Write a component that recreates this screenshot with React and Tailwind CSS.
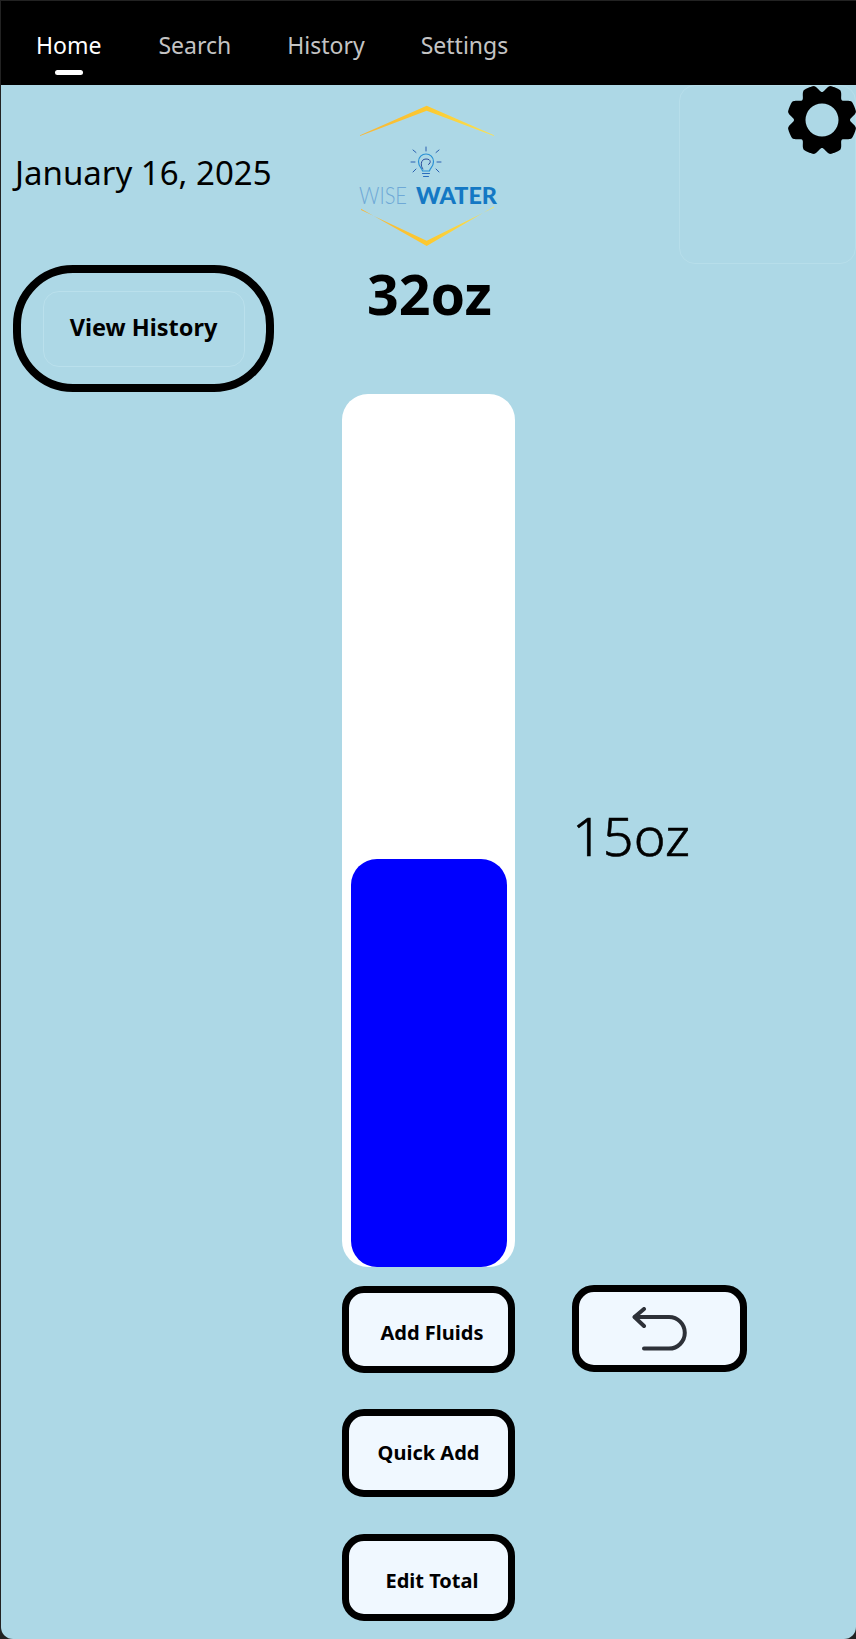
import { useMemo } from "react";

const FONT = "font-['Noto_Sans','Open_Sans',sans-serif]";

// 8 lobed cog outline, notches sit on the axes
function gearPath(cx, cy, outer, inner, hole) {
  const pts = [];
  const steps = 360;
  for (let i = 0; i < steps; i++) {
    const a = (i / steps) * Math.PI * 2;
    const period = Math.PI / 4;
    let d = ((a % period) + period) % period;
    if (d > period / 2) d = period - d;
    const t = Math.min(d / (period * 0.33), 1);
    const r = inner + (outer - inner) * (1 - Math.cos(t * Math.PI)) * 0.5;
    pts.push(`${(cx + r * Math.cos(a)).toFixed(2)} ${(cy + r * Math.sin(a)).toFixed(2)}`);
  }
  return (
    `M${pts.join("L")}Z` +
    `M${cx - hole} ${cy}a${hole} ${hole} 0 1 0 ${hole * 2} 0a${hole} ${hole} 0 1 0 ${-hole * 2} 0Z`
  );
}

function NavTab({ label, active }) {
  return (
    <div className="relative">
      <span className={`text-[23px] leading-none ${active ? "text-white" : "text-[#c4c4c4]"}`}>{label}</span>
      {active && <span className="absolute left-[19px] top-[36px] h-[5px] w-[28px] rounded-full bg-white" />}
    </div>
  );
}

function ActionButton({ label, className = "" }) {
  return (
    <button className={`flex w-[173px] items-center justify-center rounded-[22px] border-[7px] border-black bg-[#f0f8ff] text-[20px] font-bold text-black ${className}`}>
      {label}
    </button>
  );
}

function Logo() {
  return (
    <svg width="150" height="150" viewBox="0 0 150 150" className="ml-[6px]">
      <defs>
        <linearGradient id="gold" x1="0" x2="1" y1="0" y2="0">
          <stop offset="0" stopColor="#f6b73c" />
          <stop offset="0.5" stopColor="#fdc92f" />
          <stop offset="1" stopColor="#f7e25a" />
        </linearGradient>
      </defs>
      <path d="M12 35.300 L78.700 5.700 L146 35.300 L146 36 L78.700 10.700 L12 36Z" fill="url(#gold)" />
      <path d="M13 108.800 L78.700 146 L146 106.500 L146 107.500 L78.700 140.700 L13 110Z" fill="url(#gold)" />
      {/* bulb */}
      <g fill="none" strokeLinecap="round">
        <path d="M78 47v4M65 50l3 2.500M91 50l-3 2.500M63 62h4M89 62h4M65 72l3-3M91 72l-3-3" stroke="#2a5fb0" strokeWidth="1" />
        <path d="M74.500 71c-.5-3-4-4-4-9.500a7.500 7.500 0 0 1 15 0c0 5.500-3.500 6.500-4 9.500z" stroke="#2a90d4" strokeWidth="1.200" />
        <path d="M75 69c-2.500-2-3-10 3-10s4.500 5 2.500 5.500" stroke="#2b4a9a" strokeWidth="1" />
        <path d="M74.500 73.500h7M75.500 76.500h5" stroke="#2b6cbc" strokeWidth="1" />
      </g>
      <text x="11" y="104" className="font-['Lato',sans-serif]" fontSize="23" fontWeight="300" fill="#6fa9d6" textLength="48" lengthAdjust="spacingAndGlyphs">WISE</text>
      <text x="68" y="104" className="font-['Lato',sans-serif]" fontSize="23" fontWeight="900" fill="#1478c4" textLength="81" lengthAdjust="spacingAndGlyphs">WATER</text>
    </svg>
  );
}

export default function App() {
  const gear = useMemo(() => gearPath(40, 40, 35, 28, 16.5), []);

  return (
    <div className={`relative h-[1639px] w-[856px] overflow-hidden bg-[#222222] pl-[1px] pt-[1px] ${FONT}`}>
      <div className="relative h-[1638px] overflow-hidden rounded-b-[12px] bg-[#add8e6]">
        {/* top nav */}
        <nav className="flex h-[84px] items-center gap-[56px] bg-black pl-[35px] pt-[8px]">
          <NavTab label="Home" active />
          <div className="ml-[1px]">
            <NavTab label="Search" />
          </div>
          <NavTab label="History" />
          <NavTab label="Settings" />
        </nav>

        {/* settings cog */}
        <svg width="80" height="80" viewBox="0 0 80 80" className="absolute left-[781px] top-[79px]">
          <path d={gear} fill="#000" fillRule="evenodd" />
        </svg>

        <main className="flex">
          {/* left column */}
          <div className="w-[341px] pl-[12px]">
            <p className="ml-[2px] mt-[66px] text-[33px] leading-[44px] text-black">January 16, 2025</p>
            <div className="mt-[70px] flex h-[127px] w-[261px] items-center justify-center rounded-[60px] border-[8px] border-black">
              <button className="flex h-[76px] w-[202px] items-center justify-center rounded-[16px] border border-[#bae0ec] pb-[1px] text-[23.5px] font-bold text-black">
                View History
              </button>
            </div>
          </div>

          {/* center column */}
          <div className="flex w-[173px] flex-col">
            <div className="mt-[15px]">
              <Logo />
            </div>
            <p className="mt-[14px] pl-[2px] text-center text-[55.5px] font-bold leading-[60px] text-black">32oz</p>
            <div className="mt-[70px] flex h-[873px] flex-col justify-end rounded-[26px] bg-white px-[9px]">
              <div className="h-[408px] w-[156px] rounded-[26px] bg-[#0000ff]" />
            </div>
            <ActionButton label="Add Fluids" className="mt-[19px] h-[87px] pl-[7px] pt-[7px]" />
            <ActionButton label="Quick Add" className="mt-[36px] h-[88px]" />
            <ActionButton label="Edit Total" className="mt-[37px] h-[87px] pl-[7px] pt-[6px]" />
          </div>

          {/* right column */}
          <div className="flex flex-1 flex-col pl-[57px]">
            <div className="ml-[107px] h-[179px] w-[177px] shrink-0 rounded-[16px] border border-[#b7deea]" />
            <p className="mt-[532px] text-[54px] font-light leading-[78px] text-black [-webkit-text-stroke:0.6px_black]">15oz</p>
            <button className="mt-[411px] flex h-[87px] w-[175px] items-center justify-center rounded-[22px] border-[7px] border-black bg-[#f0f8ff]">
              <svg width="56" height="44" viewBox="0 0 56 44" fill="none" stroke="#2d3138" strokeWidth="4" strokeLinecap="round" strokeLinejoin="round">
                <path d="M12 2 L2.500 10 L12 19" />
                <path d="M3 10 H37 A15.800 15.800 0 0 1 37 41.600 H12" />
              </svg>
            </button>
          </div>
        </main>
      </div>
    </div>
  );
}
